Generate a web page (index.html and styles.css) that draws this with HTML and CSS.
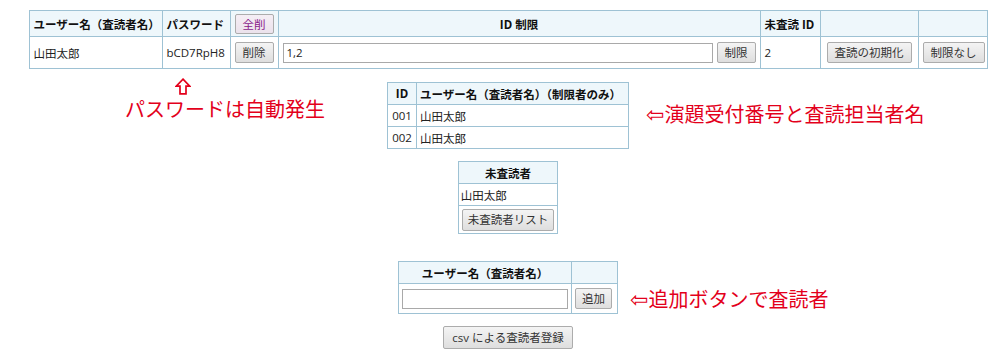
FILE: index.html
```html
<!DOCTYPE html>
<html lang="ja">
<head>
<meta charset="utf-8">
<title>査読者管理</title>
<link rel="stylesheet" href="styles.css">
</head>
<body>
<div class="page">
  <table class="grid main">
    <colgroup>
      <col class="c-user"><col class="c-pass"><col class="c-del"><col class="c-limit"><col class="c-unread"><col class="c-reset"><col class="c-free">
    </colgroup>
    <tr class="head">
      <th class="left">ユーザー名（査読者名）</th>
      <th class="left">パスワード</th>
      <th class="left"><button class="btn purple">全削</button></th>
      <th>ID 制限</th>
      <th class="left">未査読 ID</th>
      <th></th>
      <th></th>
    </tr>
    <tr class="body">
      <td>山田太郎</td>
      <td>bCD7RpH8</td>
      <td><button class="btn">削除</button></td>
      <td><div class="limit"><input class="field" type="text" value="1,2"><button class="btn">制限</button></div></td>
      <td class="top">2</td>
      <td class="center"><button class="btn">査読の初期化</button></td>
      <td class="center"><button class="btn">制限なし</button></td>
    </tr>
  </table>

  <div class="row row-ids">
    <div class="note note-left">
      <svg class="arrow-up" width="16" height="17" viewBox="0 0 16 17" aria-hidden="true">
        <path d="M8 1.2 L14.8 8.2 H11 V15.9 H5 V8.2 H1.2 Z" fill="none" stroke="#e3001b" stroke-width="1.7" stroke-linejoin="miter"/>
      </svg>
      <span class="note-text">パスワードは自動発生</span>
    </div>
    <table class="grid ids">
      <tr class="head"><th class="c-id">ID</th><th class="left">ユーザー名（査読者名）（制限者のみ）</th></tr>
      <tr><td class="c-id">001</td><td>山田太郎</td></tr>
      <tr><td class="c-id">002</td><td>山田太郎</td></tr>
    </table>
    <div class="note note-right note-ids"><span class="note-text"><span class="arrow-left">⇦</span>演題受付番号と査読担当者名</span></div>
  </div>

  <table class="grid unread">
    <tr class="head"><th>未査読者</th></tr>
    <tr><td class="tight">山田太郎</td></tr>
    <tr><td class="tight btn-cell"><button class="btn">未査読者リスト</button></td></tr>
  </table>

  <div class="row row-add">
    <div></div>
    <table class="grid add">
      <tr class="head"><th class="c-name">ユーザー名（査読者名）</th><th></th></tr>
      <tr class="add-row"><td><input class="field name-field" type="text"></td><td><button class="btn">追加</button></td></tr>
    </table>
    <div class="note note-right note-add"><span class="note-text"><span class="arrow-left">⇦</span>追加ボタンで査読者</span></div>
  </div>

  <div class="csv"><button class="btn">csv による査読者登録</button></div>
</div>
</body>
</html>
```

FILE: styles.css
```css
html, body {
  margin: 0;
  padding: 0;
  background: #ffffff;
}

body {
  font-family: "Open Sans", "Noto Sans CJK JP", sans-serif;
  font-size: 11.5px;
  color: #222222;
}

.page {
  width: 958px;
  padding: 10px 0 0 29px;
  display: flex;
  flex-direction: column;
  align-items: center;
}

.grid {
  border-collapse: collapse;
  border: 1px solid #9ec2d4;
}

.grid th,
.grid td {
  border: 1px solid #9ec2d4;
  padding: 0 4px;
  white-space: nowrap;
  vertical-align: middle;
}

.grid th {
  background: #eef7fb;
  font-weight: 700;
  text-align: center;
  color: #111111;
}

.grid th.left { text-align: left; }
.grid td.center { text-align: center; }
.grid td.top { vertical-align: middle; }

.main {
  width: 958px;
  table-layout: fixed;
}

.main col.c-user { width: 133px; }
.main col.c-pass { width: 68px; }
.main col.c-del { width: 48px; }
.main col.c-limit { width: 482px; }
.main col.c-unread { width: 60px; }
.main col.c-reset { width: 98px; }
.main col.c-free { width: 69px; }

.main tr.head th { height: 25px; }
.main tr.body td { height: 31px; }

.btn {
  font-family: "Open Sans", "Noto Sans CJK JP", sans-serif;
  font-size: 11.5px;
  color: #333333;
  height: 21px;
  padding: 0 7px;
  border: 1px solid #acacac;
  border-radius: 2px;
  background: linear-gradient(#f4f4f4, #dedede);
  line-height: 19px;
  cursor: pointer;
}

.btn.purple {
  color: #8a1a8a;
  background: linear-gradient(#f5eef5, #ebe2ec);
  height: 20px;
}

.field {
  font-family: "Open Sans", "Noto Sans CJK JP", sans-serif;
  font-size: 11.5px;
  color: #222222;
  height: 20px;
  box-sizing: border-box;
  border: 1px solid #a9a9a9;
  padding: 0 3px;
  margin: 0;
  background: #ffffff;
}

.limit {
  display: flex;
  align-items: center;
  gap: 4px;
}

.limit .field { flex: 1; min-width: 0; }

.row {
  width: 958px;
  display: grid;
  grid-template-columns: 1fr auto 1fr;
  align-items: start;
}

.row-ids { margin-top: 7px; }
.row-ids .ids { margin-top: 6px; }

.ids { width: 242px; }
.ids th, .ids td { height: 21px; padding: 0 3px; }
.ids .c-id { width: 22px; text-align: center; }

.note {
  display: flex;
  flex-direction: column;
  align-items: flex-start;
  color: #e3001b;
  font-size: 20px;
  line-height: 24px;
}

.note-text {
  font-family: "Noto Sans CJK JP", sans-serif;
  white-space: nowrap;
}

.note-left { padding-left: 96px; }

.arrow-up {
  display: block;
  margin: 2px 0 2px 50px;
}

.arrow-left {
  font-family: "DejaVu Sans", sans-serif;
  font-size: 22px;
}

.note-right { padding-left: 17px; }
.note-ids { margin-top: 26px; }

.unread {
  margin-top: 12px;
  width: 100px;
}
.unread th { height: 21px; }
.unread td.tight { padding: 0 2px; height: 21px; }
.unread td.btn-cell { height: 27px; padding: 0 3px; }
.unread .btn { padding: 0 5px; height: 22px; }

.row-add { margin-top: 27px; }

.add { width: 220px; }
.add th { height: 21px; }
.add .c-name { width: 164px; }
.add-row td { height: 29px; padding: 0 3px; }
.name-field { width: 166px; height: 20px; }
.add .btn { padding: 0 6px; }

.note-add { padding-left: 12px; margin-top: 26px; }

.csv { margin-top: 12px; }
.csv .btn { height: 23px; padding: 0 8px; }
```
